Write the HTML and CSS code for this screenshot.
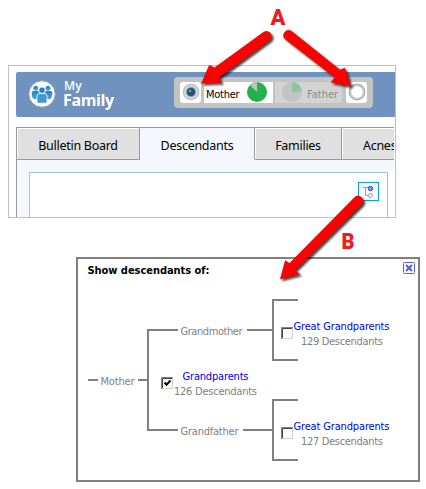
FILE: index.html
```html
<!DOCTYPE html>
<html lang="en">
<head>
<meta charset="utf-8">
<title>My Family</title>
<link rel="stylesheet" href="styles.css">
</head>
<body>
<main class="page">
  <section class="app">
    <header class="banner">
      <svg class="logo" width="28" height="28" viewBox="0 0 28 28">
        <defs><linearGradient id="people" x1="0" y1="0" x2="0" y2="1"><stop offset="0" stop-color="#2f80bd"/><stop offset="1" stop-color="#4aa5dc"/></linearGradient></defs>
        <circle cx="14" cy="14" r="13.2" fill="#fff" stroke="#9b9ba3" stroke-width="1"/>
        <g fill="url(#people)">
          <circle cx="7.7" cy="8.2" r="2.5"/><circle cx="20" cy="8.2" r="2.5"/>
          <path d="M3.6 13q0-2 2-2h4q1.5 0 1.5 2v6H5.800q-2.200-2-2.200-6zM17 13q0-2 1.500-2h4q2 0 2 2 0 4-2.300 6H17z"/>
        </g>
        <circle cx="14" cy="10.2" r="3.2" fill="#2f80bd" stroke="#fff" stroke-width=".7"/>
        <path d="M9 16q0-2.400 2.200-2.400h5.600q2.200 0 2.200 2.400v7.200H9z" fill="#4298d0" stroke="#fff" stroke-width=".8"/>
      </svg>
      <h1 class="brand"><span class="brand-my">My</span><span class="brand-family">Family</span></h1>
      <div class="switch">
        <span class="radio"><svg width="21" height="21" viewBox="0 0 21 21"><circle cx="11" cy="10" r="7.500" fill="#dfe6ea" stroke="#b9bec2" stroke-width="1.600"/><circle cx="11" cy="10" r="5.400" fill="#8fa9bb"/><circle cx="11" cy="10" r="4" fill="#254f70"/><circle cx="10" cy="9" r="1.300" fill="#72a5c6"/></svg></span>
        <span class="parent mother"><span class="parent-name">Mother</span><svg width="20" height="20" viewBox="0 0 20 20"><circle cx="10" cy="10" r="10" fill="#22b14c"/><path d="M10 10V0A10 10 0 0 0 3.100 3.200z" fill="#c3c3c3"/></svg></span>
        <span class="parent father"><svg width="20" height="20" viewBox="0 0 20 20"><circle cx="10" cy="10" r="10" fill="#c3c3c3"/><path d="M10 10V0A10 10 0 0 1 20 10z" fill="#91c5a0"/></svg><span class="parent-name">Father</span></span>
        <span class="radio"><svg width="21" height="21" viewBox="0 0 21 21"><circle cx="11" cy="10" r="7.400" fill="#fff" stroke="#b0b3b7" stroke-width="2.200"/><circle cx="11" cy="10" r="6.300" fill="none" stroke="#c3d5df" stroke-width="1.200"/></svg></span>
      </div>
    </header>
    <nav class="tabs">
      <span class="tab tab-board">Bulletin Board</span>
      <span class="tab tab-desc active">Descendants</span>
      <span class="tab tab-fam">Families</span>
      <span class="tab tab-last">Acnes</span>
    </nav>
    <div class="content">
      <div class="canvas">
        <span class="tree-button"><svg width="19" height="17" viewBox="0 0 19 17"><path d="M4 4.500h5M6.500 4.500V12.500H9" fill="none" stroke="#9c9c9c"/><circle cx="11.500" cy="5.500" r="2.300" fill="#7b8fe6" stroke="#3a55c8"/><circle cx="11.500" cy="12.500" r="2" fill="#fff" stroke="#9c9c9c"/></svg></span>
      </div>
    </div>
  </section>

  <section class="popup">
    <svg class="diagram" width="340" height="221" viewBox="78 259 340 221">
      <text class="title" x="87.500" y="273.500" textLength="122">Show descendants of:</text>
      <g class="lines">
        <path d="M88 380h10M138 380h10M178 330h-30v100h30M247 330h26M298 300h-25v60h25M243 430h30M298 400h-25v60h25"/>
      </g>
      <g class="name">
        <text x="100.500" y="385" textLength="34">Mother</text>
        <text x="180.500" y="335" textLength="62">Grandmother</text>
        <text x="180.500" y="435" textLength="58">Grandfather</text>
        <text x="301" y="345" textLength="82">129 Descendants</text>
        <text x="174" y="395" textLength="83">126 Descendants</text>
        <text x="301" y="445" textLength="82">127 Descendants</text>
      </g>
      <g class="link">
        <text x="293.500" y="330" textLength="96">Great Grandparents</text>
        <text x="182.500" y="380" textLength="66">Grandparents</text>
        <text x="293.500" y="430" textLength="96">Great Grandparents</text>
      </g>
      <g class="check">
        <path class="check-light" d="M282 338.500h10.500V328M282 438.500h10.500V428M162 388.500h10.500V378"/>
        <path class="check-dark" d="M281.500 339v-11.500H293M281.500 439v-11.500H293M161.500 389v-11.500H173"/>
        <path class="check-inner" d="M282.500 338v-9.500H292M282.500 438v-9.500H292M162.500 388v-9.500H172"/>
        <path class="check-mark" d="M164.500 382.500l2 2.200 4-4.200"/>
      </g>
      <g class="close">
        <rect x="403.500" y="262.500" width="11" height="11" rx="1"/>
        <path d="M406 265l6 6M412 265l-6 6"/>
      </g>
    </svg>
  </section>

  <svg class="callouts" width="426" height="489" viewBox="0 0 426 489">
    <defs><filter id="shadow" x="-20%" y="-20%" width="150%" height="150%"><feDropShadow dx="2" dy="2" stdDeviation="1.300" flood-color="#000" flood-opacity=".75"/></filter></defs>
    <g class="arrows" filter="url(#shadow)">
      <path d="M201.500 83.300L209.300 65.300 214.500 67.700 263.800 32A5 5 0 0 1 269.700 40L218.500 77.500 221.500 82.500z"/>
      <path d="M350.700 86L344.700 68 340 70 291.400 31.200A5 5 0 0 0 285.200 39L335 77.500 331 82.300z"/>
      <path d="M280.300 279L285.300 260.500 289.300 263.500 355 197A5 5 0 0 1 362 204L294.500 270.500 299.700 274z"/>
    </g>
    <text class="letter" x="270.500" y="25" textLength="15" lengthAdjust="spacingAndGlyphs">A</text>
    <text class="letter" x="341.500" y="248.500" textLength="13" lengthAdjust="spacingAndGlyphs">B</text>
  </svg>
</main>
</body>
</html>
```
FILE: styles.css
```css
* { box-sizing: border-box; }
body { margin: 0; background: #fff; overflow: hidden; }
.page { position: relative; width: 426px; height: 489px; padding: 65px 0 0 8px; }
.app { width: 388px; height: 153px; padding: 6px 0 0 7px; border: 1px solid #c0c0c0; overflow: hidden; }
.banner { display: flex; height: 45px; padding-left: 12px; background: #7092be; border-radius: 2px 0 0 2px; }
.logo { margin-top: 8px; flex: none; }
.brand { display: flex; flex-direction: column; width: 110px; margin: 6px 0 0 7px; color: #fff; font-family: "Open Sans", sans-serif; }
.brand-my { font-size: 12px; line-height: 15px; font-weight: 600; padding-left: 1px; letter-spacing: .2px; }
.brand-family { font-size: 16px; line-height: 15px; font-weight: 700; letter-spacing: -.4px; }
.switch { display: flex; width: 199px; height: 31px; margin: 5px 0 0 1px; padding: 5px 6px; background: #c3c3c3; border-radius: 4px; font: 11px "DejaVu Sans Condensed", "DejaVu Sans", sans-serif; }
.radio { width: 21px; height: 21px; background: #fff; border-radius: 3px; }
.radio svg { display: block; }
.parent { display: flex; align-items: center; height: 21px; }
.parent svg { flex: none; }
.mother { width: 70px; margin-left: 3px; padding-left: 2px; justify-content: space-between; padding-right: 6px; background: #fff; color: #000; }
.mother svg, .father svg { margin-top: -1px; }
.parent-name { padding-top: 3px; letter-spacing: -.25px; }
.mother .parent-name { width: 37px; }
.father { width: 67px; margin: 0 4px 0 2px; padding: 0 1px 0 7px; justify-content: space-between; background: #d3d3d3; color: #8c8c8c; border-radius: 0 3px 3px 0; }
.father .parent-name { width: 34px; letter-spacing: 0; }
.tabs { display: flex; height: 33px; margin-top: 10px; width: 378px; overflow: hidden; border-left: 1px solid #999; font: 12.5px/35px "Noto Sans", sans-serif; color: #000; letter-spacing: -.28px; }
.tab { flex: none; height: 33px; text-align: center; background: #e0e0e0; border: solid #999; border-width: 1px 1px 1px 0; box-shadow: inset 1px 1px #fff; white-space: nowrap; }
.tab-board { width: 123px; }
.tab-desc { width: 115px; }
.tab-fam { width: 87px; }
.tab-last { width: 110px; text-align: left; padding-left: 21px; }
.tab.active { background: #f4f8fe; border-bottom-color: #f4f8fe; box-shadow: none; }
.content { width: 378px; height: 58px; padding: 12px 6px 0 12px; background: linear-gradient(90deg, #f4f8fe 371px, #fff 371px) 0 11px no-repeat, #f4f8fe; border-left: 1px solid #999; }
.canvas { display: flex; justify-content: flex-end; width: 359px; height: 60px; padding: 9px 8px 0 0; background: #fff; border: 1px solid #a5bfd8; }
.tree-button { width: 21px; height: 19px; border: 1px solid #00a2e8; }
.tree-button svg { display: block; }
.popup { position: absolute; left: 76px; top: 257px; width: 344px; height: 225px; border: 2px solid #808080; background: #fff; }
.diagram { display: block; font: 11px "DejaVu Sans Condensed", "DejaVu Sans", sans-serif; }
.title { font-weight: 700; font-size: 11px; fill: #000; }
.lines path { fill: none; stroke: #808080; stroke-width: 2; }
.name { fill: #808080; }
.link { fill: #00e; }
.check path { fill: none; stroke-width: 1; }
.check .check-light { stroke: #d4d0c8; }
.check .check-dark { stroke: #808080; }
.check .check-inner { stroke: #404040; }
.check .check-mark { stroke: #000; stroke-width: 2; }
.close rect { fill: #fff; stroke: #5b5bd6; }
.close path { stroke: #5b5bd6; stroke-width: 2; }
.callouts { position: absolute; left: 0; top: 0; }
.arrows { fill: #fe0000; stroke: #c80000; stroke-width: .5; }
.letter { font: 900 22px Roboto, sans-serif; fill: #ed1c24; }
```
